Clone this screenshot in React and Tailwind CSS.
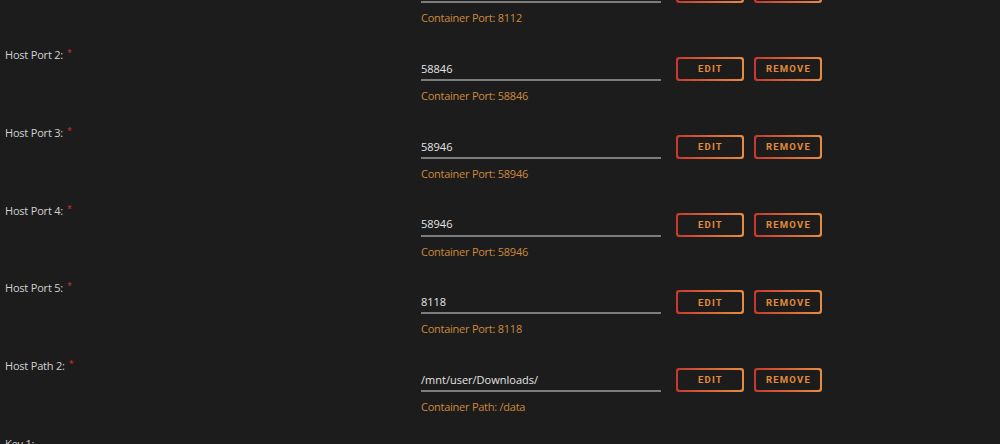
const rows = [
  { label: 'Host Port 1:', value: '8112', note: 'Container Port: 8112' },
  { label: 'Host Port 2:', value: '58846', note: 'Container Port: 58846' },
  { label: 'Host Port 3:', value: '58946', note: 'Container Port: 58946' },
  { label: 'Host Port 4:', value: '58946', note: 'Container Port: 58946' },
  { label: 'Host Port 5:', value: '8118', note: 'Container Port: 8118' },
  { label: 'Host Path 2:', value: '/mnt/user/Downloads/', note: 'Container Path: /data' },
]

function GradientButton({ children }) {
  return (
    <div className="w-[68px] rounded-[3px] bg-gradient-to-r from-[#c8372f] to-[#e68c3f] p-[2px]">
      <button
        type="button"
        className="flex h-[20px] w-full items-center justify-center rounded-[2px] bg-[#1c1c1c] pt-[1px] pl-[1px] text-[9.5px] font-bold uppercase tracking-[1.2px] text-[#e38a3b]"
        style={{ fontFamily: 'Roboto, sans-serif' }}
      >
        {children}
      </button>
    </div>
  )
}

function ConfigRow({ label, value, note }) {
  return (
    <div className="flex h-[77.75px]">
      <div className="w-[421px] shrink-0 pl-[5px]">
        <div className="text-[11px] leading-[18px] tracking-[-0.2px] text-[#d2d2d2]">
          {label}
          <span className="relative -top-[3px] ml-[4px] text-[9px] text-[#d22f2f]">*</span>
        </div>
      </div>
      <div className="flex flex-col">
        <div className="mt-[11px] flex items-end">
          <div className="flex h-[24px] w-[240px] items-center border-b-2 border-[#7c7c7c] pt-[3px] pb-[1px] text-[11px] text-[#e4e4e4]">
            {value}
          </div>
          <div className="ml-[15px] flex gap-[10px]">
            <GradientButton>Edit</GradientButton>
            <GradientButton>Remove</GradientButton>
          </div>
        </div>
        <div className="mt-[6px] text-[11px] leading-[18px] tracking-[-0.25px] text-[#cd893c]">{note}</div>
      </div>
    </div>
  )
}

export default function App() {
  return (
    <div
      className="h-[444px] w-[1000px] overflow-hidden bg-[#1c1c1c]"
      style={{ fontFamily: '"Open Sans", "Noto Sans", sans-serif' }}
    >
      <div className="-mt-[31.75px]">
        {rows.map(r => (
          <ConfigRow key={r.label} {...r} />
        ))}
        <div className="pl-[5px] text-[11px] leading-[18px] tracking-[-0.2px] text-[#d2d2d2]">Key 1:</div>
      </div>
    </div>
  )
}
